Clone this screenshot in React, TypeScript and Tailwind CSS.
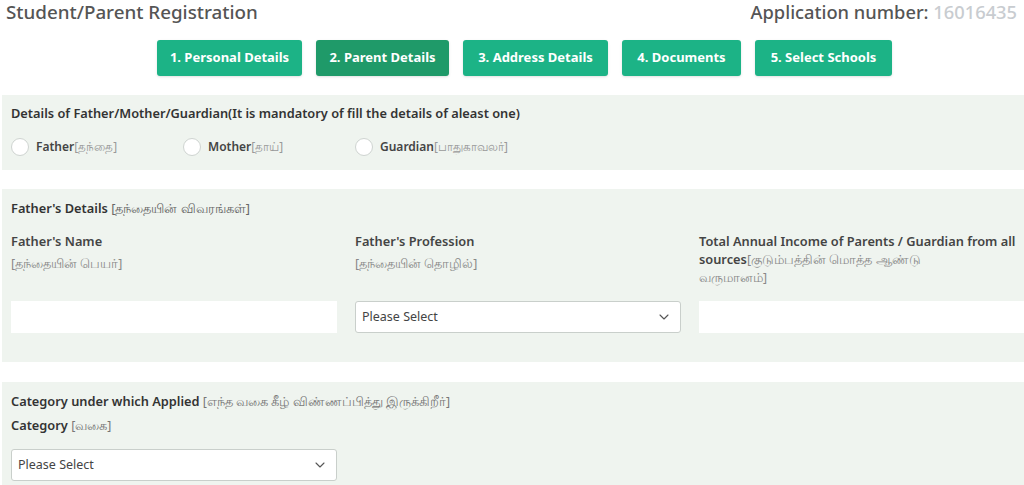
import { ChevronDown } from 'lucide-react'

const STEPS = [
  { label: '1. Personal Details', w: 'w-[145px]', active: false },
  { label: '2. Parent Details', w: 'w-[133px]', active: true },
  { label: '3. Address Details', w: 'w-[145px]', active: false },
  { label: '4. Documents', w: 'w-[119px]', active: false },
  { label: '5. Select Schools', w: 'w-[137px]', active: false },
]

const RADIOS = [
  { en: 'Father', ta: '[தந்தை]', w: 'w-[172px]' },
  { en: 'Mother', ta: '[தாய்]', w: 'w-[172px]' },
  { en: 'Guardian', ta: '[பாதுகாவலர்]', w: '' },
]

function Select({ className = '' }: { className?: string }) {
  return (
    <div
      className={`flex h-[32px] items-center justify-between rounded-[3px] border border-[#c9cfcb] bg-white pl-[6px] pr-[8px] text-[12.5px] text-[#444] ${className}`}
    >
      <span>Please Select</span>
      <ChevronDown size={16} strokeWidth={1.6} className="text-[#555]" />
    </div>
  )
}

export default function App() {
  return (
    <div
      className="h-[485px] w-[1024px] overflow-hidden bg-white text-[#333]"
      style={{ fontFamily: '"Noto Sans", "Open Sans", sans-serif' }}
    >
      {/* ── HEADER ── */}
      <div className="flex h-[28px] items-start justify-between pl-[6px] pr-[7px]">
        <h1 className="text-[18.8px] font-medium leading-[24px] text-[#555]">Student/Parent Registration</h1>
        <div className="text-[18.3px] font-medium leading-[24px] text-[#555]">
          Application number: <span className="text-[#c8ccd0]">16016435</span>
        </div>
      </div>

      {/* ── STEPS ── */}
      <div className="flex gap-[14px] pl-[157px] pt-[12px]">
        {STEPS.map((s) => (
          <div
            key={s.label}
            className={`flex h-[36px] items-center justify-center rounded-[3px] text-[13px] font-bold text-white shadow-sm ${s.w} ${
              s.active ? 'bg-[#1f9a69]' : 'bg-[#1cb386]'
            }`}
          >
            {s.label}
          </div>
        ))}
      </div>

      {/* ── WHICH PARENT ── */}
      <div className="ml-[2px] mt-[19px] h-[75px] bg-[#eff4ef] pl-[9px] pt-[9px]">
        <div className="text-[12.8px] font-semibold leading-[18px] text-[#333]">
          Details of Father/Mother/Guardian(It is mandatory of fill the details of aleast one)
        </div>
        <div className="mt-[16px] flex items-center">
          {RADIOS.map((r) => (
            <label key={r.en} className={`flex items-center gap-[7px] ${r.w}`}>
              <span className="h-[18px] w-[18px] rounded-full border border-[#cfd4d1] bg-white" />
              <span className="text-[12px] font-semibold text-[#444]">
                {r.en}
                <span className="font-normal text-[#999]">{r.ta}</span>
              </span>
            </label>
          ))}
        </div>
      </div>

      {/* ── FATHER DETAILS ── */}
      <div className="ml-[2px] mt-[19px] h-[173px] bg-[#eff4ef] pl-[9px] pt-[10px]">
        <div className="text-[12.8px] font-semibold leading-[18px] text-[#333]">
          Father's Details <span className="font-normal text-[#666]">[தந்தையின் விவரங்கள்]</span>
        </div>
        <div className="mt-[15px] grid grid-cols-[326px_326px_325px] gap-x-[18px]">
          <div className="flex flex-col">
            <div className="text-[12.8px] font-semibold leading-[18px] text-[#444]">Father's Name</div>
            <div className="mt-[5px] h-[18px] text-[12.5px] leading-[18px] text-[#888]">[தந்தையின் பெயர்]</div>
            <div className="mt-[28px] h-[32px] bg-white" />
          </div>
          <div className="flex flex-col">
            <div className="text-[12.8px] font-semibold leading-[18px] text-[#444]">Father's Profession</div>
            <div className="mt-[5px] h-[18px] text-[12.5px] leading-[18px] text-[#888]">[தந்தையின் தொழில்]</div>
            <Select className="mt-[28px]" />
          </div>
          <div className="flex flex-col">
            <div className="h-[54px] text-[12.8px] leading-[18px] text-[#444]">
              <div className="font-semibold">Total Annual Income of Parents / Guardian from all</div>
              <div>
                <span className="font-semibold">sources</span>
                <span className="text-[12.5px] text-[#888]">[குடும்பத்தின் மொத்த ஆண்டு</span>
              </div>
              <div className="text-[12.5px] text-[#888]">வருமானம்]</div>
            </div>
            <div className="mt-[15px] h-[32px] bg-white" />
          </div>
        </div>
      </div>

      {/* ── CATEGORY ── */}
      <div className="ml-[2px] mt-[20px] h-[110px] bg-[#eff4ef] pl-[9px] pt-[10px]">
        <div className="text-[12.8px] font-semibold leading-[18px] text-[#333]">
          Category under which Applied{' '}
          <span className="text-[12.5px] font-normal text-[#777]">[எந்த வகை கீழ் விண்ணப்பித்து இருக்கிறீர்]</span>
        </div>
        <div className="mt-[5px] text-[12.8px] font-semibold leading-[18px] text-[#333]">
          Category <span className="text-[12.5px] font-normal text-[#777]">[வகை]</span>
        </div>
        <Select className="mt-[14px] w-[326px]" />
      </div>
    </div>
  )
}
